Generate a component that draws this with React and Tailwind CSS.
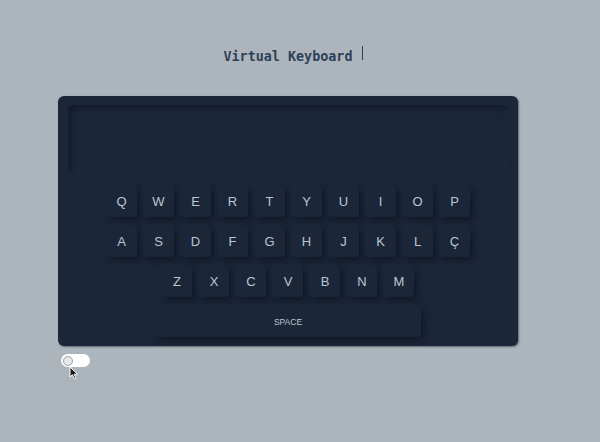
import React from "react";

const rows = [
  ["Q", "W", "E", "R", "T", "Y", "U", "I", "O", "P"],
  ["A", "S", "D", "F", "G", "H", "J", "K", "L", "Ç"],
  ["Z", "X", "C", "V", "B", "N", "M"],
];

function Key({ label }) {
  return (
    <div className="w-[30px] h-[30px] rounded-[3px] bg-[#1b2639] flex items-center justify-center text-[13px] text-[#bcc6d2] shadow-[3px_3px_6px_rgba(9,14,24,0.55),-2px_-2px_5px_rgba(42,57,82,0.3)]" style={{ fontFamily: '"Liberation Sans", Arial, sans-serif' }}>
      {label}
    </div>
  );
}

export default function App() {
  return (
    <div className="w-[600px] h-[442px] bg-[#adb5bc] overflow-hidden">
      <div className="ml-[58px] w-[460px] flex flex-col">
        <div className="pt-[47px] h-[67px] flex justify-center">
          <div className="relative h-[20px] flex items-center">
            <span className="text-[13.4px] font-bold text-[#2e3f57] leading-[20px]" style={{ fontFamily: '"DejaVu Sans Mono", "Liberation Mono", monospace' }}>
              Virtual Keyboard
            </span>
            <span className="absolute left-[calc(100%+9px)] top-[-1px] w-[1px] h-[14px] bg-[#2e3f57]"></span>
          </div>
        </div>
        <div className="mt-[29px] w-[460px] h-[250px] rounded-[6px] bg-[#1b2639] shadow-[1px_1px_2px_rgba(40,50,60,0.6)] px-[10px] pt-[9px] pb-[9px] flex flex-col">
          <div className="h-[67px] rounded-[5px] bg-[#1b2639] shadow-[inset_3px_3px_6px_rgba(9,14,24,0.45),inset_-2px_-2px_5px_rgba(45,60,85,0.35)]"></div>
          <div className="mt-[15px] flex flex-col items-center gap-[10px]">
            {rows.map((r, i) => (
              <div key={i} className="flex gap-[7px]">
                {r.map((k) => (
                  <Key key={k} label={k} />
                ))}
              </div>
            ))}
            <div className="w-[266px] h-[30px] rounded-[3px] bg-[#1b2639] flex items-center justify-center text-[8.5px] text-[#bcc6d2] shadow-[3px_3px_6px_rgba(9,14,24,0.55),-2px_-2px_5px_rgba(42,57,82,0.3)]" style={{ fontFamily: '"Liberation Sans", Arial, sans-serif' }}>
              SPACE
            </div>
          </div>
        </div>
        <div className="relative mt-[8px] ml-[3px]">
          <div className="w-[29px] h-[13px] rounded-full bg-white flex items-center pl-[2px]">
            <div className="w-[10px] h-[10px] rounded-full border-[1.5px] border-[#9aa0a7] bg-[#e8e8e8]"></div>
          </div>
          <svg className="absolute left-[8px] top-[12px]" width="10" height="14" viewBox="0 0 10 14">
            <path d="M1 1 L1 11 L3.5 8.8 L5.3 12.8 L6.9 12.1 L5.2 8.3 L8.5 8.2 Z" fill="#1a1a1a" stroke="#ffffff" strokeWidth="1" strokeLinejoin="round" />
          </svg>
        </div>
      </div>
    </div>
  );
}
